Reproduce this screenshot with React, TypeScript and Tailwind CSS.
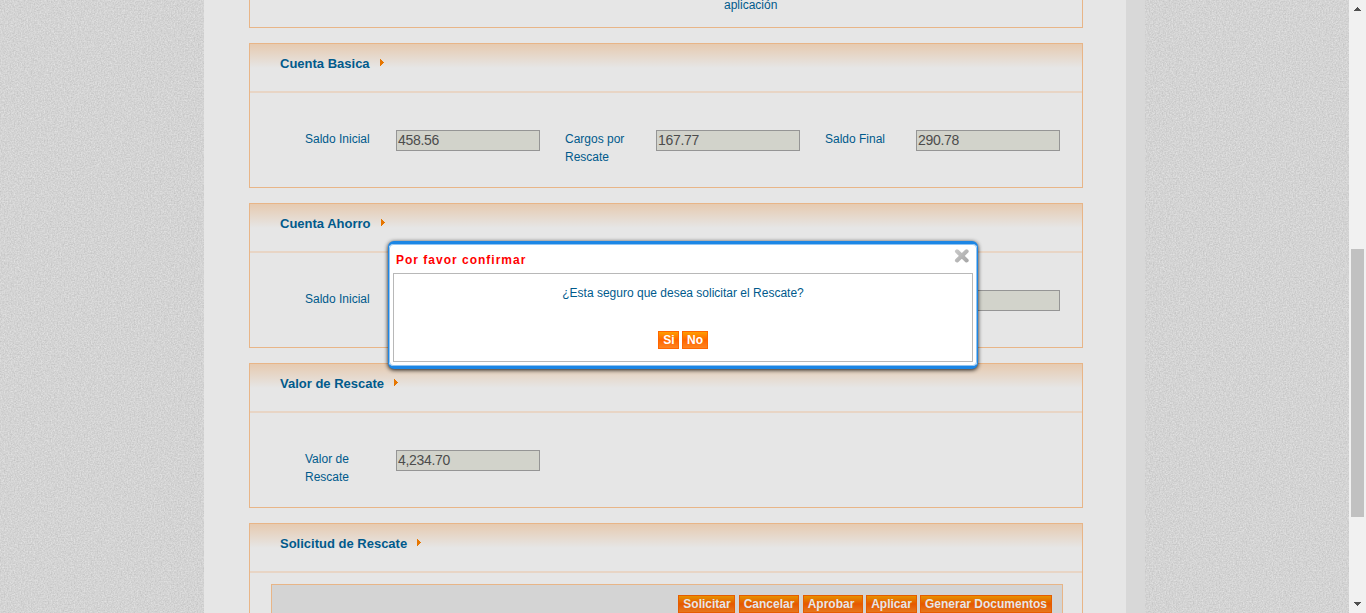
import React from "react";

function Texture({ id, className }: { id: string; className: string }) {
  return (
    <div className={`h-full shrink-0 overflow-hidden bg-[#d4d4d4] ${className}`}>
      <svg className="block h-full w-full" aria-hidden="true">
        <filter id={id} x="0" y="0" width="100%" height="100%" colorInterpolationFilters="sRGB">
          <feTurbulence type="fractalNoise" baseFrequency="0.7" numOctaves="2" seed="4" />
          <feColorMatrix values="0.17 0 0 0 0.744 0.17 0 0 0 0.744 0.17 0 0 0 0.744 0 0 0 0 1" />
        </filter>
        <rect width="100%" height="100%" filter={`url(#${id})`} />
      </svg>
    </div>
  );
}

function Field({ label = "", value = "" }: { label?: string; value?: string }) {
  return (
    <div className="flex w-[260px] shrink-0">
      <div className="w-[91px] pr-5 text-[12px] leading-[18px] text-[#005a8c]">{label}</div>
      <div className="h-[21px] w-[144px] border border-[#959595] bg-[#d2d3cb] pl-px text-[14px] leading-[19px] tracking-[-0.3px] text-[#4c4c4c]">
        {value}
      </div>
    </div>
  );
}

function Panel({ title, children, last = false }: { title: string; children: React.ReactNode; last?: boolean }) {
  return (
    <section className={`mb-[15px] shrink-0 border border-[#e8b587] ${last ? "h-[200px]" : "h-[145px]"}`}>
      <header className="flex h-[49px] border-b-2 border-[#e8d5c5] bg-[linear-gradient(#e6cab0_0px,#e6e6e6_24px)] pl-[30px] pt-[11px]">
        <h2 className="text-[13px] font-bold leading-[18px] text-[#005a8c]">{title}</h2>
        <svg className="ml-[10px] mt-[4px]" width="4" height="7" viewBox="0 0 4 7" shapeRendering="crispEdges">
          <path d="M0 0h1v1h1v1h1v1h1v1H3v1H2v1H1v1H0z" fill="#e67600" />
        </svg>
      </header>
      {children}
    </section>
  );
}

function OrangeButton({ children, className = "", active = false }: { children: React.ReactNode; className?: string; active?: boolean }) {
  const tone = active
    ? "border-[#ff6600] bg-[linear-gradient(#ff9d00,#ff6500_50%,#ff8420)] text-white"
    : "border-[#e65c00] bg-[linear-gradient(#e69100,#e65800_50%,#e6771d)] text-[#e6e6e6]";
  return (
    <button className={`block h-[18px] shrink-0 whitespace-nowrap border text-center text-[12px] font-bold leading-[16px] ${tone} ${className}`}>
      {children}
    </button>
  );
}

export default function App() {
  return (
    <div className="relative flex h-[613px] w-[1366px] overflow-hidden bg-[#e6e6e6] font-['Liberation_Sans',Arial,sans-serif]">
      <Texture id="grain-left" className="w-[204px]" />
      <main className="flex h-full w-[922px] shrink-0 flex-col overflow-hidden pl-[45px] pr-[43px]">
        <div className="mb-[15px] h-[28px] shrink-0 border-x border-b border-[#e8b587] pl-[474px]">
          <p className="-mt-[4px] text-[12px] leading-[18px] text-[#005a8c]">aplicación</p>
        </div>
        <Panel title="Cuenta Basica">
          <div className="flex pl-[55px] pt-[37px]">
            <Field label="Saldo Inicial" value="458.56" />
            <Field label="Cargos por Rescate" value="167.77" />
            <Field label="Saldo Final" value="290.78" />
          </div>
        </Panel>
        <Panel title="Cuenta Ahorro">
          <div className="flex pl-[55px] pt-[37px]">
            <Field label="Saldo Inicial" />
            <Field />
            <Field />
          </div>
        </Panel>
        <Panel title="Valor de Rescate">
          <div className="flex pl-[55px] pt-[37px]">
            <Field label="Valor de Rescate" value="4,234.70" />
          </div>
        </Panel>
        <Panel title="Solicitud de Rescate" last>
          <div className="ml-[21px] mt-[11px] flex h-[60px] w-[792px] justify-end border border-[#e8b587] bg-[#d4d4d4] pr-[10px] pt-[10px]">
            <OrangeButton className="mr-1 w-[57px] pl-px">Solicitar</OrangeButton>
            <OrangeButton className="mr-1 w-[60px]">Cancelar</OrangeButton>
            <OrangeButton className="mr-[3px] w-[60px] pr-1">Aprobar</OrangeButton>
            <OrangeButton className="mr-[3px] w-[51px]">Aplicar</OrangeButton>
            <OrangeButton className="w-[132px]">Generar Documentos</OrangeButton>
          </div>
        </Panel>
      </main>
      <div className="w-[19px] shrink-0 bg-[#d8d8d8]" />
      <Texture id="grain-right" className="w-[204px]" />
      <div className="flex h-full w-[17px] shrink-0 flex-col items-center bg-[#f1f1f1]">
        <svg className="h-[17px] w-[17px] shrink-0" viewBox="0 0 17 17" shapeRendering="crispEdges">
          <path d="M8 7h1v1h1v1h1v1h1v1H5v-1h1V9h1V8h1z" fill="#505050" />
        </svg>
        <div className="mt-[232px] h-[268px] w-[13px] bg-[#c1c1c1]" />
        <svg className="mt-auto h-[17px] w-[17px] shrink-0" viewBox="0 0 17 17" shapeRendering="crispEdges">
          <path d="M5 6h7v1h-1v1h-1v1H9v1H8V9H7V8H6V7H5z" fill="#505050" />
        </svg>
      </div>

      <div
        role="dialog"
        className="absolute left-[388px] top-[241px] flex h-[128px] w-[590px] flex-col rounded-[6px] border-x border-y-[3px] border-[#1c86e5] bg-white shadow-[0_1px_4px_0px_rgba(0,0,0,0.9)]"
      >
        <div className="flex h-full flex-col rounded-[4px] border border-[#91c4f1] px-[3px] pb-[3px]">
          <div className="flex h-[28px] shrink-0 justify-between">
            <h3 className="pl-[3px] pt-[6px] text-[12px] font-bold leading-[18px] tracking-[1px] text-[#ff0000]">
              Por favor confirmar
            </h3>
            <svg className="mr-[3px] mt-[3px]" width="16" height="16" viewBox="0 0 16 16">
              <defs>
                <linearGradient id="close-tone" gradientUnits="userSpaceOnUse" x1="2" y1="2" x2="14" y2="14">
                  <stop offset="0" stopColor="#c8c8c8" />
                  <stop offset="1" stopColor="#a6a6a6" />
                </linearGradient>
              </defs>
              <path d="M3 3.3 12.6 12.4M12.6 3.3 3 12.4" stroke="url(#close-tone)" strokeWidth="4.1" strokeLinecap="round" />
            </svg>
          </div>
          <div className="flex grow flex-col items-center border border-[#b8b8b8] pt-[10px]">
            <p className="text-[12px] leading-[18px] text-[#005a8c]">¿Esta seguro que desea solicitar el Rescate?</p>
            <div className="mt-[29px] flex gap-[3px]">
              <OrangeButton active className="w-[21px] pl-px">Si</OrangeButton>
              <OrangeButton active className="w-[26px]">No</OrangeButton>
            </div>
          </div>
        </div>
      </div>
    </div>
  );
}
